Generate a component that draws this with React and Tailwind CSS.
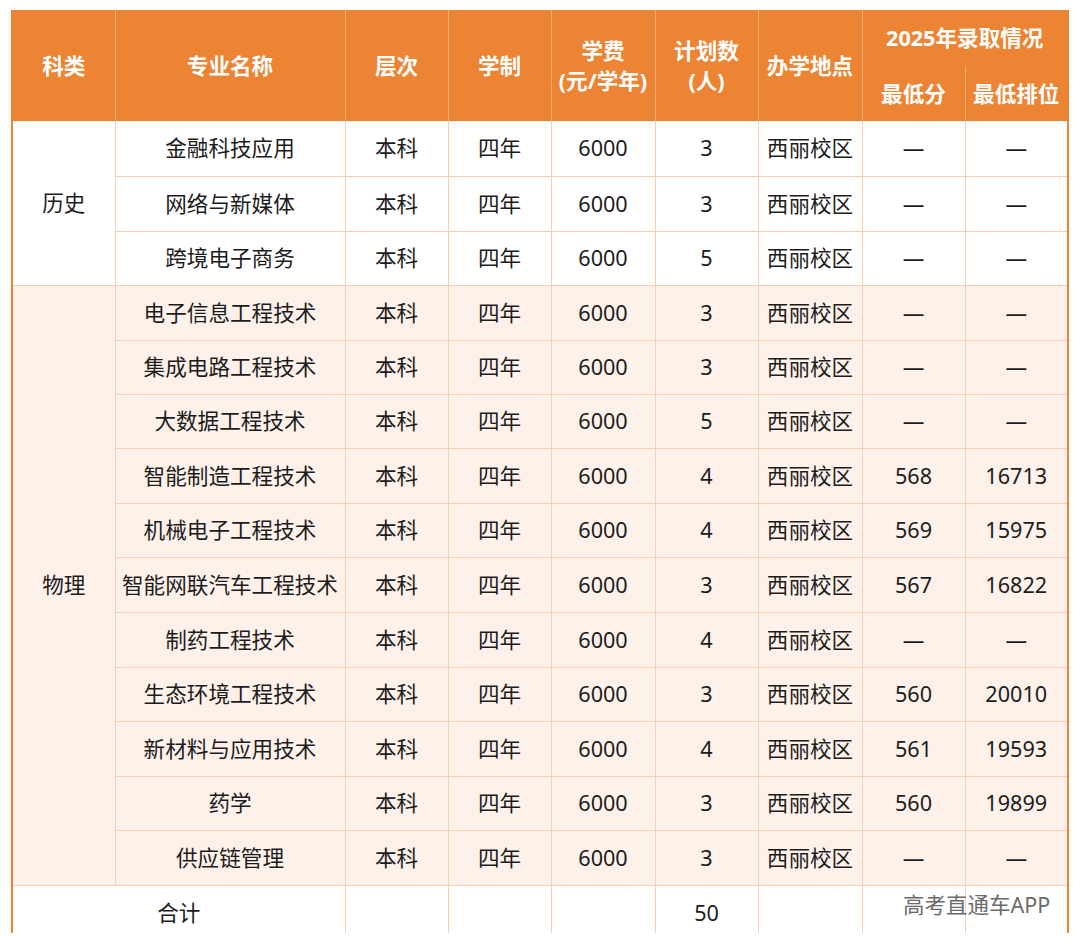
import React from 'react';

const FONT = { fontFamily: '"Noto Sans", "Noto Sans CJK SC", sans-serif' };

const HISTORY = [
  ['金融科技应用', '3', '—', '—'],
  ['网络与新媒体', '3', '—', '—'],
  ['跨境电子商务', '5', '—', '—'],
];

const PHYSICS = [
  ['电子信息工程技术', '3', '—', '—'],
  ['集成电路工程技术', '3', '—', '—'],
  ['大数据工程技术', '5', '—', '—'],
  ['智能制造工程技术', '4', '568', '16713'],
  ['机械电子工程技术', '4', '569', '15975'],
  ['智能网联汽车工程技术', '3', '567', '16822'],
  ['制药工程技术', '4', '—', '—'],
  ['生态环境工程技术', '3', '560', '20010'],
  ['新材料与应用技术', '4', '561', '19593'],
  ['药学', '3', '560', '19899'],
  ['供应链管理', '3', '—', '—'],
];

// row heights picked off the screenshot so the grid lines land where they should
const HEIGHTS = [55, 55, 54, 55, 54, 54, 55, 54, 55, 55, 54, 55, 54, 55];

const th = 'border-r border-[#f3ac74] bg-[#ec8434] text-center align-middle font-bold text-white';
const td = 'border-r border-b border-[#f7cfb2] text-center align-middle';

function Row({ row, height, first, bg }) {
  const [name, plan, score, rank] = row;
  return (
    <tr className={bg} style={{ height }}>
      {first}
      <td className={td}>{name}</td>
      <td className={td}>本科</td>
      <td className={td}>四年</td>
      <td className={td}>6000</td>
      <td className={td}>{plan}</td>
      <td className={td}>西丽校区</td>
      <td className={td}>{score}</td>
      <td className={td}>{rank}</td>
    </tr>
  );
}

export default function App() {
  return (
    <div className="relative min-h-[945px] bg-white pl-[11px] pt-[10px]" style={FONT}>
      <div className="h-[923px] overflow-hidden">
        <table className="table-fixed border-collapse border-l-2 border-r-2 border-[#ec8434] text-[21.6px] leading-[30px] text-[#1c1c1c]">
          <colgroup>
            <col className="w-[103px]" />
            <col className="w-[230px]" />
            <col className="w-[103px]" />
            <col className="w-[103px]" />
            <col className="w-[104px]" />
            <col className="w-[103px]" />
            <col className="w-[104px]" />
            <col className="w-[103px]" />
            <col className="w-[103px]" />
          </colgroup>
          <thead>
            <tr className="h-[55px]">
              <th rowSpan={2} className={th}>科类</th>
              <th rowSpan={2} className={th}>专业名称</th>
              <th rowSpan={2} className={th}>层次</th>
              <th rowSpan={2} className={th}>学制</th>
              <th rowSpan={2} className={th}>学费<br />(元/学年)</th>
              <th rowSpan={2} className={th}>计划数<br />(人)</th>
              <th rowSpan={2} className={th}>办学地点</th>
              <th colSpan={2} className={`${th} border-b border-b-[#ec8434] pt-[2px]`}>2025年录取情况</th>
            </tr>
            <tr className="h-[56px]">
              <th className={`${th} pt-[2px]`}>最低分</th>
              <th className={`${th} pt-[2px] border-r-[#ec8434]`}>最低排位</th>
            </tr>
          </thead>
          <tbody>
            {HISTORY.map((row, i) => (
              <Row
                key={row[0]}
                row={row}
                height={HEIGHTS[i]}
                bg="bg-white"
                first={i === 0 ? <td rowSpan={3} className={td}>历史</td> : null}
              />
            ))}
            {PHYSICS.map((row, i) => (
              <Row
                key={row[0]}
                row={row}
                height={HEIGHTS[i + 3]}
                bg="bg-[#fdf1ea]"
                first={i === 0 ? <td rowSpan={11} className={td}>物理</td> : null}
              />
            ))}
            <tr className="h-[55px] bg-white">
              <td colSpan={2} className={td}>合计</td>
              <td className={td}></td>
              <td className={td}></td>
              <td className={td}></td>
              <td className={td}>50</td>
              <td className={td}></td>
              <td className={td}></td>
              <td className={td}></td>
            </tr>
          </tbody>
        </table>
      </div>
      <div className="absolute left-[903px] top-[890px] text-[21.5px] leading-[30px] text-[#6b6b6b]">
        高考直通车APP
      </div>
    </div>
  );
}
